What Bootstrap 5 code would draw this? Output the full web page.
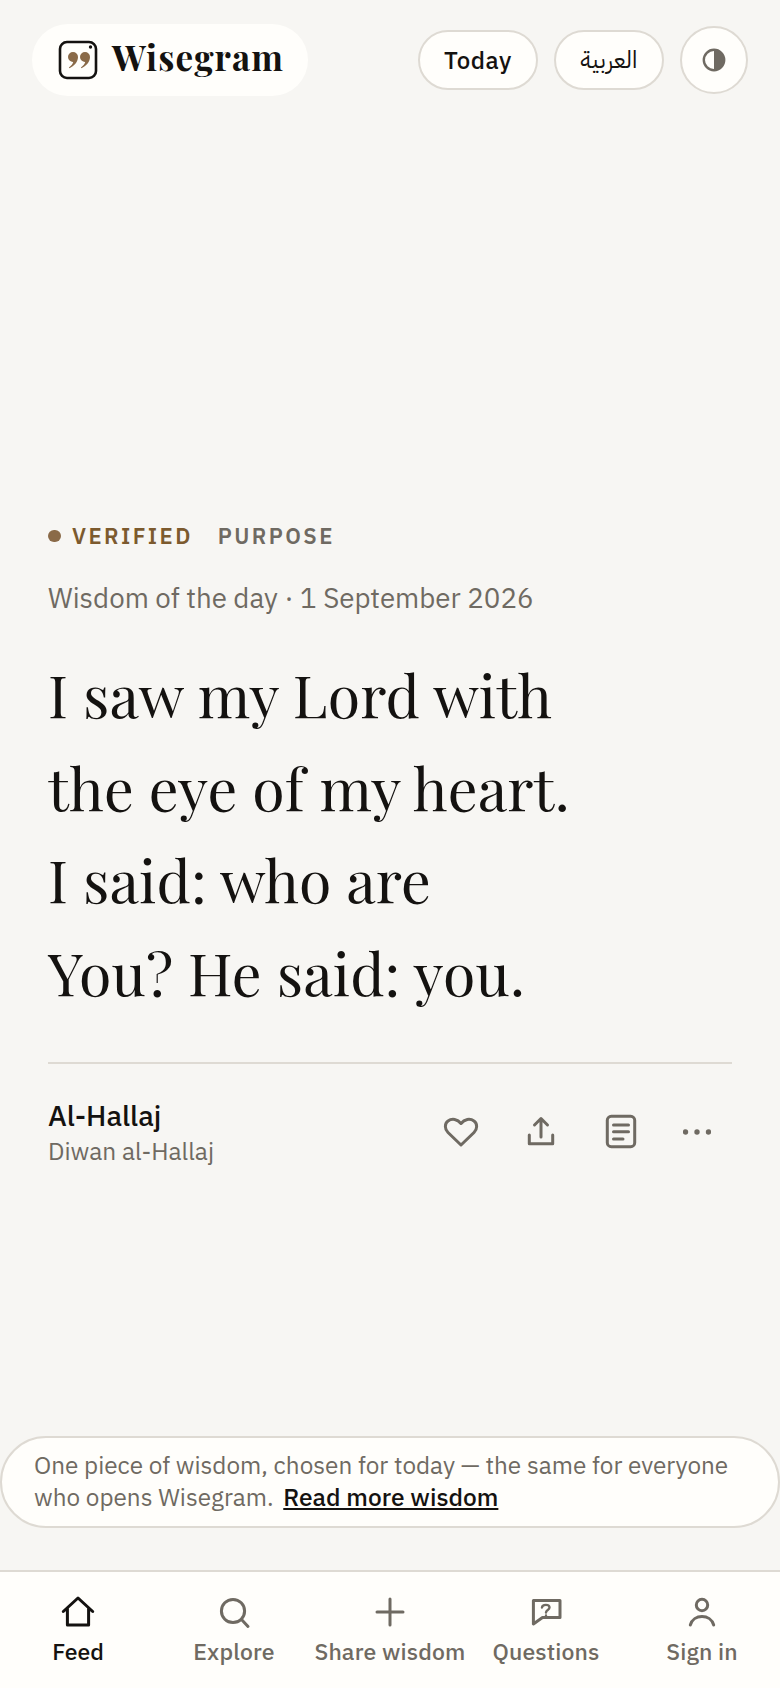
<!DOCTYPE html>
<html lang="en">
<head>
<meta charset="utf-8">
<title>Wisegram</title>
<link href="https://cdn.jsdelivr.net/npm/bootstrap@5.3.0/dist/css/bootstrap.min.css" rel="stylesheet">
<style>
:root{--ink:#141210;--mute:#6f6a62;--line:#dedad3;--paper:#f7f6f3;--card:#fffefb;--bronze:#8a6a48;}
html,body{height:100%;}
body{background:var(--paper);color:var(--ink);font-family:"IBM Plex Sans","Noto Sans",sans-serif;width:780px;height:1688px;overflow:hidden;}
.wg-page{height:1688px;}
.wg-top{padding:24px 32px;height:120px;}
.wg-logo{height:72px;width:276px;padding-left:26px;gap:14px;background:var(--card);border-radius:36px;color:var(--ink);text-decoration:none;}
.wg-logo-name{font-family:"Playfair Display","Liberation Serif",serif;font-weight:700;font-size:35px;letter-spacing:1.1px;line-height:1;padding-bottom:7px;}
.btn.wg-pill{height:60px;background:var(--card);border:2px solid var(--line);border-radius:30px;color:var(--ink);font-size:24px;font-weight:500;letter-spacing:.5px;padding:0;}
.btn.wg-pill-today{width:120px;}
.btn.wg-pill-ar{width:110px;font-family:"IBM Plex Sans Arabic","IBM Plex Sans",sans-serif;font-weight:400;letter-spacing:0;}
.btn.wg-round{width:68px;height:68px;border-radius:50%;background:var(--card);border:2px solid var(--line);padding:0;}
.wg-main{padding:0 48px;height:1316px;padding-top:402px;}
.wg-kicker{font-size:22px;font-weight:600;letter-spacing:2.4px;line-height:28px;gap:25px;}
.wg-dot{width:12.5px;height:12.5px;border-radius:50%;background:var(--bronze);margin-right:11.5px;}
.wg-verified{color:#7c5a2e;}
.wg-purpose{color:var(--mute);}
.wg-date{font-size:27.7px;color:var(--mute);line-height:36px;margin-top:30px;}
.wg-quote{font-family:"Playfair Display","Liberation Serif",serif;font-weight:400;font-size:59px;letter-spacing:.15px;line-height:92.7px;color:var(--ink);margin:32px 0 0 0;}
.wg-rule{height:2px;background:var(--line);margin-top:43px;}
.wg-foot{margin-top:35px;}
.wg-author{font-size:28.5px;font-weight:500;line-height:34px;}
.wg-source{font-size:24.5px;color:var(--mute);line-height:30px;margin-top:3px;}
.wg-actions{gap:44px;margin-right:21px;}
.wg-notice{height:92px;background:var(--card);border:2px solid var(--line);border-radius:46px;padding:11px 32px;font-size:24.3px;line-height:32px;color:var(--mute);}
.wg-notice a{color:var(--ink);font-weight:500;font-size:24.5px;margin-left:4px;}
.wg-nav{margin-top:auto;height:118px;background:var(--card);border-top:2px solid var(--line);}
.wg-tab{width:156px;color:var(--mute);text-decoration:none;font-size:23px;font-weight:500;letter-spacing:.15px;line-height:28px;padding-top:22px;gap:7px;white-space:nowrap;}
.wg-tab.wg-on{color:var(--ink);letter-spacing:0;}
svg{display:block;}
</style>
</head>
<body>
<div class="wg-page d-flex flex-column">
  <header class="wg-top d-flex justify-content-between align-items-center">
    <a class="wg-logo d-flex align-items-center" href="#">
      <svg width="40" height="40" viewBox="0 0 40 40" fill="none">
        <rect x="2" y="2" width="36" height="36" rx="7" stroke="#141210" stroke-width="2.600" fill="#fffefb"/>
        <circle cx="32.500" cy="7" r="1.700" fill="#141210"/>
        <path d="M10 17a5 5 0 1 1 10 0c0 5-4 9-8.500 11.200l-.6-.8c2.500-1.800 4-3.800 4.300-5.500a5 5 0 0 1-5.200-4.900z" fill="#8a6a48"/>
        <path d="M22 17a5 5 0 1 1 10 0c0 5-4 9-8.500 11.200l-.6-.8c2.500-1.800 4-3.800 4.300-5.500a5 5 0 0 1-5.200-4.900z" fill="#8a6a48"/>
      </svg>
      <span class="wg-logo-name">Wisegram</span>
    </a>
    <div class="d-flex align-items-center">
      <button class="wg-pill wg-pill-today btn me-3">Today</button>
      <button class="wg-pill wg-pill-ar btn me-3" lang="ar" dir="rtl">العربية</button>
      <button class="wg-round btn d-flex align-items-center justify-content-center" aria-label="Theme">
        <svg width="24" height="24" viewBox="0 0 24 24"><circle cx="12" cy="12" r="10.200" fill="none" stroke="#6f6a62" stroke-width="2.400"/><path d="M12 1.800a10.200 10.200 0 0 1 0 20.400z" fill="#6f6a62"/></svg>
      </button>
    </div>
  </header>

  <main class="wg-main">
    <div class="wg-kicker d-flex align-items-center">
      <span class="d-flex align-items-center wg-verified"><span class="wg-dot"></span>VERIFIED</span>
      <span class="wg-purpose">PURPOSE</span>
    </div>
    <div class="wg-date">Wisdom of the day · 1 September 2026</div>
    <h1 class="wg-quote">I saw my Lord with<br>the eye of my heart.<br>I said: who are<br>You? He said: you.</h1>
    <div class="wg-rule"></div>
    <div class="wg-foot d-flex justify-content-between align-items-center">
      <div>
        <div class="wg-author">Al-Hallaj</div>
        <div class="wg-source">Diwan al-Hallaj</div>
      </div>
      <div class="wg-actions d-flex align-items-center">
        <svg width="36" height="36" viewBox="0 0 36 36" fill="none" stroke="#6f6a62" stroke-width="3" stroke-linejoin="round"><path d="M18 31 5 18.500C1.500 15 1.500 9.500 5 7c4-3 9.500-2 13 2.500C21.500 5 27 4 31 7c3.500 2.500 3.500 8 0 11.500z"/></svg>
        <svg width="36" height="36" viewBox="0 0 36 36" fill="none" stroke="#6f6a62" stroke-width="3" stroke-linecap="round" stroke-linejoin="round"><path d="M18 23V4.500M11.500 11 18 4.500 24.500 11M6.300 21v8.700h23.400V21"/></svg>
        <svg width="36" height="36" viewBox="0 0 36 36" fill="none" stroke="#6f6a62" stroke-width="3" stroke-linecap="round" stroke-linejoin="round"><rect x="4.300" y="2.300" width="27.400" height="30.400" rx="4"/><path d="M10.500 11h15M10.500 17.700h15M10.500 25h9.500"/></svg>
        <svg width="28" height="36" viewBox="0 0 28 36" fill="#6f6a62"><circle cx="2.500" cy="18" r="2.700"/><circle cx="14" cy="18" r="2.700"/><circle cx="25.500" cy="18" r="2.700"/></svg>
      </div>
    </div>
  </main>

  <div class="wg-notice">One piece of wisdom, chosen for today — the same for everyone who opens Wisegram. <a href="#">Read more wisdom</a></div>

  <nav class="wg-nav d-flex">
    <a class="wg-tab wg-on d-flex flex-column align-items-center" href="#">
      <svg width="36" height="36" viewBox="0 0 36 36" fill="none" stroke="#141210" stroke-width="3" stroke-linecap="round" stroke-linejoin="round"><path d="M3.300 17.500 18 4l14.700 13.500M7.400 14v17h21.200V14"/></svg>Feed</a>
    <a class="wg-tab d-flex flex-column align-items-center" href="#">
      <svg width="36" height="36" viewBox="0 0 36 36" fill="none" stroke="#6f6a62" stroke-width="3" stroke-linecap="round"><circle cx="17" cy="17" r="11.600"/><path d="M25.500 25.500 32 32.500"/></svg>Explore</a>
    <a class="wg-tab d-flex flex-column align-items-center" href="#">
      <svg width="36" height="36" viewBox="0 0 36 36" fill="none" stroke="#6f6a62" stroke-width="3" stroke-linecap="round"><path d="M18 5v26M5 18h26"/></svg>Share wisdom</a>
    <a class="wg-tab d-flex flex-column align-items-center" href="#">
      <svg width="36" height="36" viewBox="0 0 36 36" fill="none" stroke="#6f6a62" stroke-width="3" stroke-linejoin="round"><path d="M5.400 6.400H32v17.200H14.500L5.400 30z"/><path d="M14 13.500c.3-3.500 7.500-3.500 7.500 0 0 2.500-3.500 2.500-3.500 5" stroke-linecap="round" stroke-width="2.400"/><circle cx="18" cy="21.500" r=".6" fill="#6f6a62" stroke-width="1.200"/></svg>Questions</a>
    <a class="wg-tab d-flex flex-column align-items-center" href="#">
      <svg width="36" height="36" viewBox="0 0 36 36" fill="none" stroke="#6f6a62" stroke-width="3" stroke-linecap="round"><circle cx="18" cy="11" r="5.700"/><path d="M6.300 31c1.500-5.500 6.500-8.500 11.700-8.500s10.200 3 11.700 8.500"/></svg>Sign in</a>
  </nav>
</div>
</body>
</html>
